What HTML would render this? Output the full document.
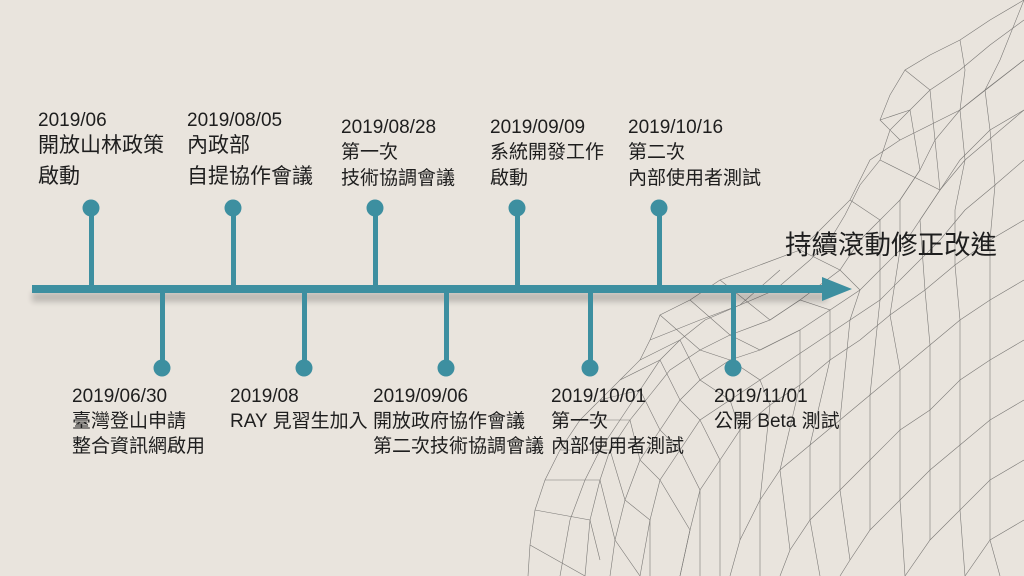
<!DOCTYPE html>
<html><head><meta charset="utf-8"><style>
html,body{margin:0;padding:0}
body{width:1024px;height:576px;background:#e9e4dd;position:relative;overflow:hidden;font-family:"Liberation Sans","Noto Sans CJK TC",sans-serif;color:#1e1e1e}
.t{position:absolute;white-space:nowrap;line-height:1}
.d{font-size:19px}
.c{font-size:19px}
.b{font-size:21px}
</style></head><body>
<svg width="1024" height="576" style="position:absolute;left:0;top:0">
<defs><filter id="sh" x="-5%" y="-50%" width="110%" height="300%"><feGaussianBlur stdDeviation="3"/></filter></defs>
<g stroke="#333" stroke-width="0.6" fill="none" opacity="0.6">
<polyline points="1024,0 990,20 960,40 930,55 905,70 890,95 880,120 900,140 870,160 850,200 820,230 800,250 760,265 720,280 690,300"/>
<polyline points="690,300 660,315 650,340 640,360 620,380 600,400 580,420 560,450 545,480 535,510 530,545 528,576"/>
<polyline points="1024,20 990,45 960,70 930,90 910,110 890,130 880,160 860,185 845,215 830,240 810,260 775,290 740,305 705,320 680,340 660,360 640,390 620,420 600,450 585,480 570,520 560,576"/>
<polyline points="1024,60 985,90 960,110 935,140 920,170 900,200 880,220 860,240 840,270 800,300 770,320 730,335 700,350 670,370 650,395 630,420 610,450 600,480 590,520 585,576"/>
<polyline points="1024,110 990,130 960,160 940,190 920,220 900,250 880,270 860,290 830,310 800,330 760,350 730,360 700,380 680,400 660,430 640,460 625,500 615,540 610,576"/>
<polyline points="1024,160 995,185 965,210 940,240 910,270 880,300 850,320 820,340 790,360 760,380 730,400 700,420 680,450 660,480 650,520 640,576"/>
<polyline points="1024,220 990,240 955,265 925,290 890,315 860,340 830,360 800,385 770,405 740,430 720,460 700,490 690,530 680,576"/>
<polyline points="1024,280 990,300 960,320 930,345 900,370 870,395 840,420 810,445 780,470 760,500 740,540 730,576"/>
<polyline points="1024,340 990,360 960,380 930,410 900,430 870,460 840,490 810,520 790,550 780,576"/>
<polyline points="1024,400 990,420 960,445 930,470 900,500 870,530 850,560 840,576"/>
<polyline points="1024,460 990,480 960,510 930,540 905,576"/>
<polyline points="1024,520 990,540 965,576"/>
<polyline points="960,40 965,70 960,110 965,160 955,210 955,265 960,320 960,380 960,445 960,510 965,576"/>
<polyline points="905,70 930,90 935,140 940,190 920,220 925,290 930,345 930,410 930,470 930,540"/>
<polyline points="880,120 910,110 920,170 900,200 900,250 890,315 900,370 900,430 900,500 905,576"/>
<polyline points="850,200 880,220 880,270 880,300 870,395 870,460 870,530"/>
<polyline points="800,250 840,270 860,290 850,320 840,420 840,490 850,560"/>
<polyline points="720,280 770,320 800,300 830,310 830,360 810,445 810,520 820,576"/>
<polyline points="690,300 730,335 760,350 800,330 800,385 780,470 790,550"/>
<polyline points="660,315 700,350 730,360 760,380 770,405 760,500 760,576"/>
<polyline points="640,360 680,340 700,380 730,400 740,430 740,540"/>
<polyline points="620,380 660,360 680,400 700,420 720,460 720,576"/>
<polyline points="600,400 640,390 660,430 680,450 700,490 700,576"/>
<polyline points="580,420 630,420 640,460 660,480 690,530 680,576"/>
<polyline points="560,450 610,450 625,500 650,520 650,576"/>
<polyline points="545,480 600,480 615,540 640,576"/>
<polyline points="535,510 590,520 600,560"/>
<polyline points="530,545 585,576"/>
<polyline points="1024,0 1000,60 985,90 990,130 995,185 990,240 990,300 990,360 990,420 990,480 990,540 1000,576"/>
<polyline points="880,160 940,190 965,160 1024,110"/>
<polyline points="900,140 960,110 1024,60"/>
<polyline points="650,340 700,320 740,305 780,270"/>
</g>
<rect x="32" y="292" width="795" height="10" fill="#000" opacity="0.18" filter="url(#sh)"/>
<g fill="#3d8fa0">
<rect x="32" y="285" width="795" height="8"/>
<polygon points="822,277 852,289 822,301"/>
<rect x="89" y="208" width="5" height="80"/><circle cx="91" cy="208" r="8.5"/>
<rect x="231" y="208" width="5" height="80"/><circle cx="233" cy="208" r="8.5"/>
<rect x="373" y="208" width="5" height="80"/><circle cx="375" cy="208" r="8.5"/>
<rect x="515" y="208" width="5" height="80"/><circle cx="517" cy="208" r="8.5"/>
<rect x="657" y="208" width="5" height="80"/><circle cx="659" cy="208" r="8.5"/>
<rect x="160" y="290" width="5" height="78"/><circle cx="162" cy="368" r="8.5"/>
<rect x="302" y="290" width="5" height="78"/><circle cx="304" cy="368" r="8.5"/>
<rect x="444" y="290" width="5" height="78"/><circle cx="446" cy="368" r="8.5"/>
<rect x="588" y="290" width="5" height="78"/><circle cx="590" cy="368" r="8.5"/>
<rect x="731" y="290" width="5" height="78"/><circle cx="733" cy="368" r="8.5"/>
</g>
</svg>
<div class="t d" style="left:38px;top:111px">2019/06</div>
<div class="t b" style="left:38px;top:135px">開放山林政策</div>
<div class="t b" style="left:38px;top:166px">啟動</div>
<div class="t d" style="left:187px;top:111px">2019/08/05</div>
<div class="t b" style="left:187px;top:135px">內政部</div>
<div class="t b" style="left:187px;top:166px">自提協作會議</div>
<div class="t d" style="left:341px;top:118px">2019/08/28</div>
<div class="t c" style="left:341px;top:143px">第一次</div>
<div class="t c" style="left:341px;top:169px">技術協調會議</div>
<div class="t d" style="left:490px;top:118px">2019/09/09</div>
<div class="t c" style="left:490px;top:143px">系統開發工作</div>
<div class="t c" style="left:490px;top:169px">啟動</div>
<div class="t d" style="left:628px;top:118px">2019/10/16</div>
<div class="t c" style="left:628px;top:143px">第二次</div>
<div class="t c" style="left:628px;top:169px">內部使用者測試</div>
<div class="t" style="left:785px;top:232px;font-size:26.5px">持續滾動修正改進</div>
<div class="t d" style="left:72px;top:387px">2019/06/30</div>
<div class="t c" style="left:72px;top:412px">臺灣登山申請</div>
<div class="t c" style="left:72px;top:437px">整合資訊網啟用</div>
<div class="t d" style="left:230px;top:387px">2019/08</div>
<div class="t c" style="left:230px;top:412px">RAY 見習生加入</div>
<div class="t d" style="left:373px;top:387px">2019/09/06</div>
<div class="t c" style="left:373px;top:412px">開放政府協作會議</div>
<div class="t c" style="left:373px;top:437px">第二次技術協調會議</div>
<div class="t d" style="left:551px;top:387px">2019/10/01</div>
<div class="t c" style="left:551px;top:412px">第一次</div>
<div class="t c" style="left:551px;top:437px">內部使用者測試</div>
<div class="t d" style="left:714px;top:387px">2019/11/01</div>
<div class="t c" style="left:714px;top:412px">公開 Beta 測試</div>
</body></html>
